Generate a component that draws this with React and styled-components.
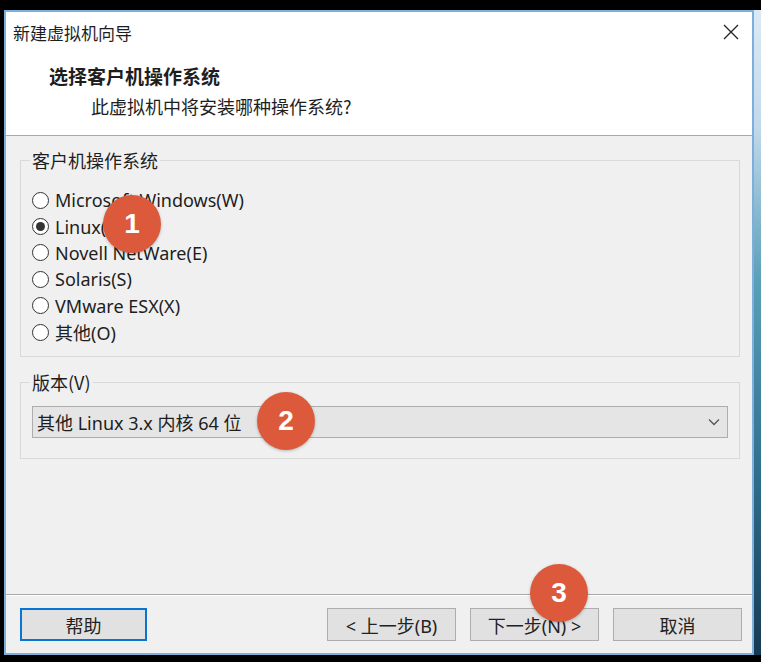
import React from "react";
import styled, { createGlobalStyle } from "styled-components";

const GlobalStyle = createGlobalStyle`
  * {
    margin: 0;
    padding: 0;
    box-sizing: border-box;
  }
  html, body {
    background: #000;
  }
  body {
    font-family: "Noto Sans", "Noto Sans CJK SC", sans-serif;
    color: #1e1e1e;
  }
`;

const Screen = styled.div`
  width: 761px;
  height: 662px;
  display: flex;
  padding: 10px 0 7px 4px;
  background: #000;
  overflow: hidden;
`;

const Window = styled.div`
  position: relative;
  width: 750px;
  height: 645px;
  border: 2px solid #7eaedc;
  display: flex;
  flex-direction: column;
  background: #f0f0f0;
`;

const DesktopEdge = styled.div`
  flex: 1;
  background: linear-gradient(#dbe9f4 0%, #c2d9eb 18%, #5a9fb8 42%, #2f6f8c 72%, #173a52 100%);
`;

const TitleBar = styled.div`
  height: 40px;
  background: #fff;
  display: flex;
  align-items: center;
  justify-content: space-between;
  padding: 0 12px 0 7px;
  font-size: 17px;
  font-family: "Noto Sans CJK SC", sans-serif;
`;

const CloseButton = styled.div`
  width: 18px;
  height: 18px;
  display: grid;
  place-items: center;
`;

const Header = styled.div`
  height: 84px;
  background: #fff;
  padding: 12px 0 0 43px;
  border-bottom: 1px solid #a8a8a8;
  font-family: "Noto Sans CJK SC", sans-serif;
`;

const HeaderTitle = styled.div`
  font-size: 19px;
  font-weight: 700;
  line-height: 24px;
`;

const HeaderSub = styled.div`
  font-size: 18px;
  line-height: 24px;
  margin-top: 6px;
  padding-left: 42px;
`;

const Content = styled.div`
  flex: 1;
  padding: 0 12px 0 14px;
  display: flex;
  flex-direction: column;
`;

const Group = styled.fieldset`
  border: 1px solid #d9d9d9;
  margin-top: ${(p) => p.$mt}px;
  padding: 0 11px ${(p) => p.$pb}px 11px;
`;

const Legend = styled.legend`
  font-size: 18px;
  line-height: 22px;
  padding: 0 2px;
  margin-left: -2px;
  font-family: "Noto Sans CJK SC", sans-serif;
`;

const RadioList = styled.div`
  padding-top: 16px;
`;

const RadioRow = styled.label`
  height: 26.4px;
  display: flex;
  align-items: center;
  gap: 6px;
  font-size: 18px;
`;

const RadioCircle = styled.span`
  width: 17px;
  height: 17px;
  border: 1px solid #333;
  border-radius: 50%;
  background: #fff;
  display: grid;
  place-items: center;
  flex-shrink: 0;

  &::after {
    content: "";
    width: 9px;
    height: 9px;
    border-radius: 50%;
    background: ${(p) => (p.$checked ? "#333" : "transparent")};
  }
`;

const Select = styled.div`
  margin-top: 13px;
  height: 32px;
  background: #e5e5e5;
  border: 1px solid #adadad;
  display: flex;
  align-items: center;
  justify-content: space-between;
  padding: 0 7px 0 4px;
  font-size: 18px;
`;

const Footer = styled.div`
  height: 59px;
  border-top: 1px solid #a8a8a8;
  box-shadow: inset 0 1px 0 #fff;
  display: flex;
  gap: 14px;
  padding: 13px 10px 0 14px;
`;

const Button = styled.div`
  width: ${(p) => p.$w || 129}px;
  height: 33px;
  background: #e1e1e1;
  border: ${(p) => (p.$focused ? "2px solid #0a74d2" : "1px solid #adadad")};
  display: flex;
  align-items: center;
  justify-content: center;
  font-size: 18px;
  color: #222;
  margin-right: ${(p) => (p.$push ? "auto" : "0")};
`;

const Badge = styled.div`
  position: absolute;
  width: 58px;
  height: 58px;
  border-radius: 50%;
  background: #dc5a3b;
  color: #fff;
  display: grid;
  place-items: center;
  font-family: "Liberation Sans", Arial, sans-serif;
  font-weight: 700;
  font-size: 28px;
  box-shadow: 0 1px 3px rgba(0, 0, 0, 0.25);
`;

const options = [
  { label: "Microsoft Windows(W)" },
  { label: "Linux(L)", checked: true },
  { label: "Novell NetWare(E)" },
  { label: "Solaris(S)" },
  { label: "VMware ESX(X)" },
  { label: "其他(O)" },
];

const badges = [
  { n: 1, x: 97, y: 183 },
  { n: 2, x: 251, y: 380 },
  { n: 3, x: 524, y: 552 },
];

function App() {
  return (
    <>
      <GlobalStyle />
      <Screen>
        <Window>
          <TitleBar>
            <span>新建虚拟机向导</span>
            <CloseButton>
              <svg width="16" height="16" viewBox="0 0 16 16">
                <path d="M1 1L15 15M15 1L1 15" stroke="#222" strokeWidth="1.3" />
              </svg>
            </CloseButton>
          </TitleBar>
          <Header>
            <HeaderTitle>选择客户机操作系统</HeaderTitle>
            <HeaderSub>此虚拟机中将安装哪种操作系统?</HeaderSub>
          </Header>

          <Content>
            <Group $mt={13} $pb={11}>
              <Legend>客户机操作系统</Legend>
              <RadioList>
                {options.map((o) => (
                  <RadioRow key={o.label}>
                    <RadioCircle $checked={o.checked} />
                    <span>{o.label}</span>
                  </RadioRow>
                ))}
              </RadioList>
            </Group>

            <Group $mt={14} $pb={20}>
              <Legend>版本(V)</Legend>
              <Select>
                <span>其他 Linux 3.x 内核 64 位</span>
                <svg width="12" height="8" viewBox="0 0 12 8">
                  <path d="M1 1.5L6 6.5L11 1.5" fill="none" stroke="#555" strokeWidth="1.3" />
                </svg>
              </Select>
            </Group>
          </Content>

          <Footer>
            <Button $w={127} $focused $push>帮助</Button>
            <Button>&lt; 上一步(B)</Button>
            <Button>下一步(N) &gt;</Button>
            <Button>取消</Button>
          </Footer>

          {badges.map((b) => (
            <Badge key={b.n} style={{ left: b.x, top: b.y }}>
              {b.n}
            </Badge>
          ))}
        </Window>
        <DesktopEdge />
      </Screen>
    </>
  );
}

export default App;
